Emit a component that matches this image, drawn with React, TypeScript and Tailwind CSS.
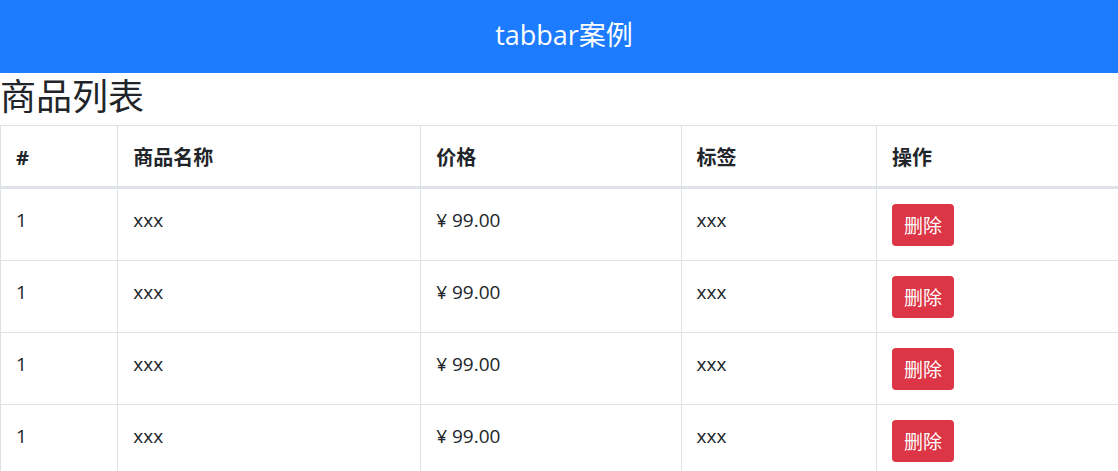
const columns = ["#", "商品名称", "价格", "标签", "操作"];

const goods = [
  { key: 1, id: 1, name: "xxx", price: 99, tag: "xxx" },
  { key: 2, id: 1, name: "xxx", price: 99, tag: "xxx" },
  { key: 3, id: 1, name: "xxx", price: 99, tag: "xxx" },
  { key: 4, id: 1, name: "xxx", price: 99, tag: "xxx" },
];

const cell = "border border-[#dee2e6] px-[15px] pt-[15px] pb-[14px] last:border-r-0";

export default function App() {
  return (
    <div className="h-screen overflow-hidden bg-white font-['Open_Sans','Noto_Sans_CJK_SC',sans-serif] text-[19px] leading-8 text-[#212529]">
      <header className="bg-[#1d7bff] pt-3 pb-4 pl-2.5 text-center text-[27px] leading-[45px] text-white">
        tabbar案例
      </header>
      <main>
        <h1 className="mb-1 text-4xl leading-12">商品列表</h1>
        <table className="w-full table-fixed border-collapse">
          <colgroup>
            <col className="w-[10.5%]" />
            <col className="w-[27.1%]" />
            <col className="w-[23.3%]" />
            <col className="w-[17.5%]" />
            <col />
          </colgroup>
          <thead>
            <tr>
              {columns.map((c) => (
                <th
                  key={c}
                  className="border border-b-3 border-[#dee2e6] px-[15px] pt-4 pb-3 text-left text-xl leading-8 font-bold last:border-r-0"
                >
                  {c}
                </th>
              ))}
            </tr>
          </thead>
          <tbody>
            {goods.map((g) => (
              <tr key={g.key} className="align-top">
                <td className={cell}>{g.id}</td>
                <td className={cell}>{g.name}</td>
                <td className={cell}>¥ {g.price.toFixed(2)}</td>
                <td className={cell}>{g.tag}</td>
                <td className={cell}>
                  <button type="button" className="block rounded bg-[#dc3545] px-3 pt-1.5 pb-1 text-white">
                    删除
                  </button>
                </td>
              </tr>
            ))}
          </tbody>
        </table>
      </main>
    </div>
  );
}
